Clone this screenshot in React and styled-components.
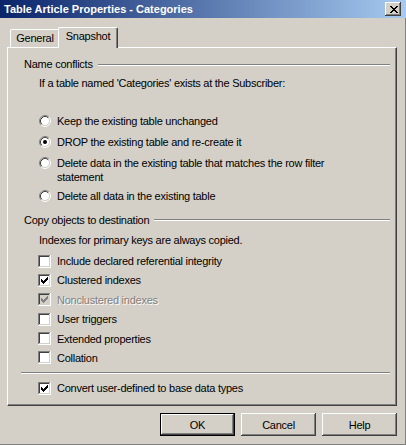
import styled, { createGlobalStyle } from "styled-components";

const GlobalStyle = createGlobalStyle`
  html, body {
    margin: 0;
    padding: 0;
    background: #d4d0c8;
  }
  body {
    font-family: "Liberation Sans", Arial, sans-serif;
    font-size: 11px;
    color: #000;
  }
`;

const nameOptions = [
  { label: "Keep the existing table unchanged" },
  { label: "DROP the existing table and re-create it", checked: true },
  { label: "Delete data in the existing table that matches the row filter statement" },
  { label: "Delete all data in the existing table" },
];

const copyOptions = [
  { label: "Include declared referential integrity" },
  { label: "Clustered indexes", checked: true },
  { label: "Nonclustered indexes", checked: true, disabled: true },
  { label: "User triggers" },
  { label: "Extended properties" },
  { label: "Collation" },
];

const RadioIcon = ({ checked }) => (
  <svg width="12" height="12" viewBox="0 0 12 12">
    <circle cx="6" cy="6" r="4.5" fill="#fff" />
    <path d="M2.11 9.89A5.5 5.5 0 0 1 9.89 2.11" fill="none" stroke="#808080" />
    <path d="M9.89 2.11A5.5 5.5 0 0 1 2.11 9.89" fill="none" stroke="#fff" />
    <path d="M2.82 9.18A4.5 4.5 0 0 1 9.18 2.82" fill="none" stroke="#404040" />
    <path d="M9.18 2.82A4.5 4.5 0 0 1 2.82 9.18" fill="none" stroke="#d4d0c8" />
    {checked && <circle cx="6" cy="6" r="2" fill="#000" />}
  </svg>
);

const CHECK_PATH =
  "M3 5h1v3h-1zM4 6h1v3h-1zM5 7h1v3h-1zM6 6h1v3h-1zM7 5h1v3h-1zM8 4h1v3h-1zM9 3h1v3h-1z";

const CheckIcon = ({ checked, disabled }) => (
  <svg width="13" height="13" viewBox="0 0 13 13" shapeRendering="crispEdges">
    <rect x="0" y="0" width="13" height="13" fill="#fff" />
    <rect x="0" y="0" width="12" height="1" fill="#808080" />
    <rect x="0" y="0" width="1" height="12" fill="#808080" />
    <rect x="1" y="1" width="10" height="1" fill="#404040" />
    <rect x="1" y="1" width="1" height="10" fill="#404040" />
    <rect x="1" y="11" width="11" height="1" fill="#d4d0c8" />
    <rect x="11" y="1" width="1" height="11" fill="#d4d0c8" />
    <rect x="2" y="2" width="9" height="9" fill={disabled ? "#d4d0c8" : "#fff"} />
    {checked && <path d={CHECK_PATH} fill={disabled ? "#808080" : "#000"} />}
  </svg>
);

const CloseGlyph = () => (
  <svg width="8" height="7" viewBox="0 0 8 7" shapeRendering="crispEdges">
    <path
      d="M0 0h2v1h-2zM6 0h2v1h-2zM1 1h2v1h-2zM5 1h2v1h-2zM2 2h4v1h-4zM3 3h2v1h-2zM2 4h4v1h-4zM1 5h2v1h-2zM5 5h2v1h-2zM0 6h2v1h-2zM6 6h2v1h-2z"
      fill="#000"
    />
  </svg>
);

const App = () => {
  return (
    <>
      <GlobalStyle />
      <Window>
        <TitleBar>
          <Title>Table Article Properties - Categories</Title>
          <CloseButton aria-label="Close">
            <CloseGlyph />
          </CloseButton>
        </TitleBar>
        <Body>
          <TabStrip>
            <Tab>General</Tab>
            <Tab $active>Snapshot</Tab>
          </TabStrip>
          <Panel>
            <GroupHeader>
              <span>Name conflicts</span>
              <Etch />
            </GroupHeader>
            <Note $mt={6}>If a table named 'Categories' exists at the Subscriber:</Note>

            <OptionList $mt={24} $gap={7.5}>
              {nameOptions.map((opt, i) => (
                <Option key={opt.label} $mt={i === 3 ? -2 : 0}>
                  <Control>
                    <RadioIcon checked={opt.checked} />
                  </Control>
                  <OptionText>{opt.label}</OptionText>
                </Option>
              ))}
            </OptionList>

            <GroupHeader $mt={11}>
              <span>Copy objects to destination</span>
              <Etch />
            </GroupHeader>
            <Note $mt={7}>Indexes for primary keys are always copied.</Note>

            <OptionList $mt={8} $gap={5.9}>
              {copyOptions.map((opt) => (
                <Option key={opt.label}>
                  <Control>
                    <CheckIcon checked={opt.checked} disabled={opt.disabled} />
                  </Control>
                  <OptionText $disabled={opt.disabled}>{opt.label}</OptionText>
                </Option>
              ))}
            </OptionList>

            <Separator />

            <OptionList $mt={8}>
              <Option>
                <Control>
                  <CheckIcon checked />
                </Control>
                <OptionText>Convert user-defined to base data types</OptionText>
              </Option>
            </OptionList>
          </Panel>
          <ButtonRow>
            <Button $default>OK</Button>
            <Button>Cancel</Button>
            <Button>Help</Button>
          </ButtonRow>
        </Body>
      </Window>
    </>
  );
};

export default App;

const Window = styled.div`
  width: 406px;
  height: 445px;
  display: flex;
  flex-direction: column;
  background: #d4d0c8;
  overflow: hidden;
`;

const TitleBar = styled.div`
  flex: none;
  height: 18px;
  display: flex;
  align-items: center;
  justify-content: space-between;
  padding: 0 5px 0 4px;
  background: linear-gradient(to right, #0a246a, #a6caf0);
`;

const Title = styled.span`
  color: #fff;
  font-weight: bold;
  font-size: 11px;
  white-space: nowrap;
`;

const CloseButton = styled.button`
  width: 16px;
  height: 14px;
  padding: 0 0 0 1px;
  margin: 0;
  border: none;
  background: #d4d0c8;
  display: flex;
  align-items: center;
  justify-content: center;
  box-shadow: inset -1px -1px #404040, inset 1px 1px #fff, inset -2px -2px #808080;
`;

const Body = styled.div`
  flex: 1;
  display: flex;
  flex-direction: column;
  padding: 9px 0 0 7px;
  letter-spacing: -0.25px;
  border-right: 1px solid #808080;
  border-bottom: 1px solid #808080;
`;

const TabStrip = styled.div`
  position: relative;
  z-index: 1;
  height: 21px;
  margin-bottom: -1px;
  display: flex;
  align-items: flex-end;
  padding-left: 3px;
`;

const Tab = styled.div`
  box-sizing: border-box;
  height: ${(p) => (p.$active ? 21 : 18)}px;
  width: ${(p) => (p.$active ? 60 : 50)}px;
  margin-bottom: ${(p) => (p.$active ? 0 : 1)}px;
  margin-left: ${(p) => (p.$active ? -2 : 0)}px;
  padding-top: 2px;
  text-align: center;
  line-height: 13px;
  background: #d4d0c8;
  border-left: 1px solid #fff;
  border-top: 1px solid #fff;
  border-right: 1px solid #404040;
  border-radius: 2px 2px 0 0;
  box-shadow: inset -1px 0 #808080;
  position: relative;
  z-index: ${(p) => (p.$active ? 2 : 1)};
`;

const Panel = styled.div`
  box-sizing: border-box;
  width: 390px;
  height: 359px;
  display: flex;
  flex-direction: column;
  padding: 10px 6px 0 16px;
  border-top: 1px solid #fff;
  border-left: 1px solid #fff;
  border-right: 1px solid #404040;
  border-bottom: 1px solid #404040;
  box-shadow: inset -1px -1px #808080;
`;

const GroupHeader = styled.div`
  display: flex;
  align-items: center;
  gap: 5px;
  height: 13px;
  line-height: 13px;
  margin-top: ${(p) => p.$mt || 0}px;
  white-space: nowrap;
`;

const Etch = styled.div`
  flex: 1;
  height: 0;
  border-top: 1px solid #808080;
  border-bottom: 1px solid #fff;
`;

const Note = styled.div`
  height: 13px;
  line-height: 13px;
  padding-left: 15px;
  margin-top: ${(p) => p.$mt || 0}px;
`;

const OptionList = styled.div`
  display: flex;
  flex-direction: column;
  gap: ${(p) => p.$gap || 0}px;
  margin-top: ${(p) => p.$mt || 0}px;
`;

const Option = styled.div`
  display: flex;
  align-items: flex-start;
  gap: 6px;
  padding-left: 14px;
  margin-top: ${(p) => p.$mt || 0}px;
`;

const Control = styled.div`
  flex: none;
  width: 13px;
  height: 13px;
  display: flex;
  align-items: center;
  justify-content: flex-end;
`;

const OptionText = styled.div`
  line-height: 14px;
  margin-top: -0.5px;
  max-width: 285px;
  color: ${(p) => (p.$disabled ? "#808080" : "#000")};
  text-shadow: ${(p) => (p.$disabled ? "1px 1px 0 #fff" : "none")};
`;

const Separator = styled.div`
  margin-top: 7px;
  height: 0;
  border-top: 1px solid #808080;
  border-bottom: 1px solid #fff;
  margin-left: -3px;
`;

const ButtonRow = styled.div`
  width: 390px;
  display: flex;
  justify-content: flex-end;
  gap: 6px;
  margin-top: 7px;
`;

const Button = styled.button`
  box-sizing: border-box;
  width: 75px;
  height: 23px;
  margin: 0;
  padding: 0;
  font-family: inherit;
  font-size: 11px;
  letter-spacing: inherit;
  color: #000;
  background: #d4d0c8;
  border: ${(p) => (p.$default ? "1px solid #000" : "none")};
  box-shadow: inset -1px -1px #404040, inset 1px 1px #fff, inset -2px -2px #808080;
`;
